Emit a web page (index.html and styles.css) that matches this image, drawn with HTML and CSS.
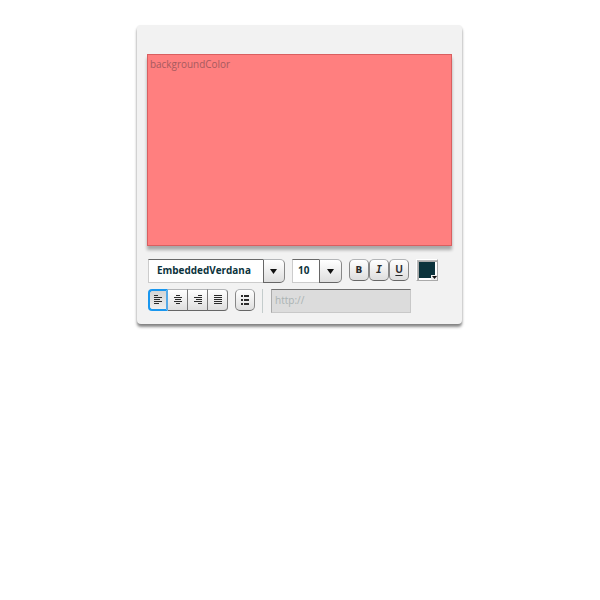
FILE: index.html
```html
<!DOCTYPE html>
<html lang="en">
<head>
<meta charset="utf-8">
<title>Rich text editor</title>
<link rel="stylesheet" href="styles.css">
</head>
<body>
<main class="panel">
  <div class="editor">backgroundColor</div>
  <div class="row">
    <div class="combo font"><span class="value">EmbeddedVerdana</span><span class="drop"><svg width="7" height="5"><path d="M0 0H7L3.5 5Z"/></svg></span></div>
    <div class="combo size"><span class="value">10</span><span class="drop"><svg width="7" height="5"><path d="M0 0H7L3.5 5Z"/></svg></span></div>
    <div class="group">
      <button class="btn bold">B</button><button class="btn italic">I</button><button class="btn underline">U</button>
    </div>
    <div class="picker"><span class="corner"><svg width="5" height="3"><path d="M0 0H5L2.5 3Z"/></svg></span></div>
  </div>
  <div class="row second">
    <div class="group bar">
      <button class="btn selected"><svg width="8" height="9"><path d="M0 0h4v1H0zM0 2h8v1H0zM0 4h6v1H0zM0 6h8v1H0zM0 8h5v1H0z"/></svg></button>
      <button class="btn"><svg width="8" height="9"><path d="M2 0h4v1H2zM0 2h8v1H0zM1 4h6v1H1zM0 6h8v1H0zM2 8h4v1H2z"/></svg></button>
      <button class="btn"><svg width="8" height="9"><path d="M4 0h4v1H4zM0 2h8v1H0zM2 4h6v1H2zM0 6h8v1H0zM4 8h4v1H4z"/></svg></button>
      <button class="btn"><svg width="8" height="9"><path d="M0 0h8v1H0zM0 2h8v1H0zM0 4h8v1H0zM0 6h8v1H0zM0 8h8v1H0z"/></svg></button>
    </div>
    <button class="btn list"><svg width="8" height="10"><path d="M0 0h2v2H0zM3 0h5v2H3zM0 4h2v2H0zM3 4h5v2H3zM0 8h2v2H0zM3 8h5v2H3z"/></svg></button>
    <span class="separator"></span>
    <div class="link">http://</div>
  </div>
</main>
</body>
</html>
```
FILE: styles.css
```css
* { box-sizing: border-box; }
body {
  margin: 0; min-height: 600px; padding: 25px 0 0 137px;
  background: #fff; font-family: "Open Sans", sans-serif;
}
.panel {
  width: 325px; height: 299px; padding: 29px 10px 0;
  background: #f2f2f2; border-radius: 4px;
  box-shadow: 0 3px 3px rgba(0,0,0,.45), 0 1px 2px rgba(0,0,0,.1);
}
.editor {
  width: 305px; height: 192px; padding: 2px 2px; border: 1px solid #d95f60;
  background: #ff7f7f; color: #a65a5e; font-size: 9.95px; line-height: 15px;
  box-shadow: 0 4px 3px rgba(0,0,0,.3);
}
.row { display: flex; align-items: flex-start; height: 24px; margin: 13px 0 0 1px; }
.second { margin-top: 6px; }
.combo { display: flex; height: 24px; margin-right: 7px; }
.value {
  height: 24px; border: 1px solid #ccc; border-top-color: #696969; border-right: 0;
  background: #fff; color: #0b333c; font-weight: 700; font-size: 9.95px; line-height: 21px;
}
.font .value { width: 115px; padding-left: 8px; }
.size .value { width: 27px; padding-left: 5px; }
.drop, .btn {
  display: flex; align-items: center; justify-content: center;
  border: 1px solid #999; border-color: #b3b5b7 #878787 #666;
  background: linear-gradient(#fff, #dedede);
}
.drop { width: 23px; height: 24px; padding-top: 1px; border-left-color: #666; border-radius: 0 5px 5px 0; }
.font .drop { width: 22px; padding-right: 1px; }
svg { display: block; fill: #111; }
.group { display: flex; margin-right: 7px; }
.btn {
  width: 20px; height: 22px; padding: 0; border-radius: 5px; color: #2b2b2b;
  font: 700 10px/12px "Liberation Sans", sans-serif;
}
.btn svg { fill: #2b2b2b; }
.bold { font-family: "DejaVu Sans", sans-serif; font-size: 9px; }
.italic { font-family: "DejaVu Sans Mono", monospace; font-style: italic; font-size: 10px; }
.underline { text-decoration: underline; text-underline-offset: 2px; }
.bar .btn { padding: 0 0 1px 1px; border-radius: 0; border-left-width: 0; border-right-color: #777; }
.bar .btn:last-child { border-radius: 0 4px 4px 0; }
.bar .btn.selected {
  padding-left: 0; border: 2px solid #1997ef; border-right-color: #56a9e6;
  border-radius: 4px 0 0 4px; background: linear-gradient(#d5d5d5, #eee);
}
.picker {
  position: relative; width: 22px; height: 22px; border: 1px solid #fff;
  border-right-color: #aaa; border-bottom-color: #aaa; background: #0b333c;
  box-shadow: inset 1px 1px #bbb, inset 2px 2px #aaa, inset -2px -2px #fff;
}
.corner {
  position: absolute; right: 0; bottom: 0; width: 6px; height: 5px;
  display: flex; align-items: center; justify-content: center; background: #eee;
}
.separator { width: 1px; height: 24px; margin: 0 8px 0 7px; background: #c4cccc; }
.link {
  width: 140px; height: 24px; padding-left: 3px; border: 1px solid #c8c8c8;
  border-top-color: #707070; border-left-color: #aaa; background: #dcdcdc;
  color: #aab3b3; font-size: 10px; line-height: 21px;
}
```
